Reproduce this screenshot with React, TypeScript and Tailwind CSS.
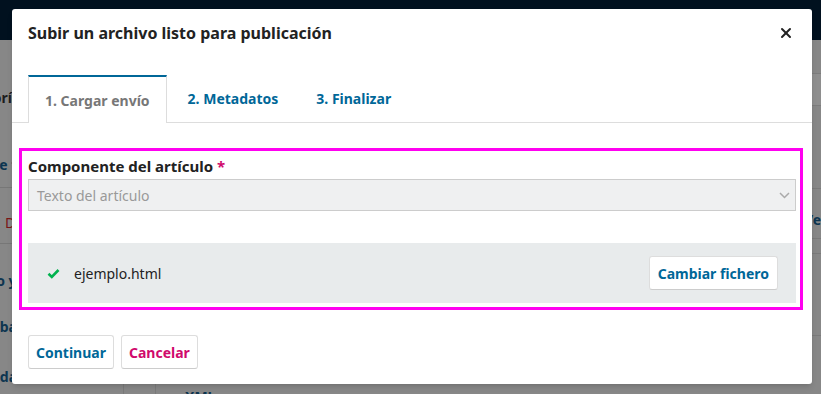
import { X } from 'lucide-react';

const blue = 'text-[#006798]';

function BackgroundPage() {
  return (
    <div className="flex h-full w-full flex-col bg-[#878787]">
      <div className="h-10 shrink-0 bg-[#01111f]" />
      <div className="flex flex-1">
        <div className="flex w-[124px] shrink-0 flex-col border-r border-[#7a7a7a] overflow-hidden">
          <div className="mt-[47px] -ml-[48px] whitespace-nowrap text-[14px] font-bold text-[#1d1d1d]">Categorías</div>
          <div className="mt-[46px] -ml-[43px] whitespace-nowrap text-[14px] font-bold text-[#0d3550]">Tipo de texto</div>
          <div className="mt-[12px] h-px bg-[#777]" />
          <div className="mt-[24px] ml-[5px] whitespace-nowrap text-[14px] text-[#7a1616]">Descargar</div>
          <div className="mt-[10px] h-px bg-[#777]" />
          <div className="mt-[26px] -ml-[48px] whitespace-nowrap text-[14px] font-bold text-[#0d3550]">Archivo y más</div>
          <div className="mt-[25px] -ml-[22px] whitespace-nowrap text-[14px] font-bold text-[#0d3550]">Trabajo</div>
          <div className="mt-[29px] -ml-[27px] whitespace-nowrap text-[14px] font-bold text-[#0d3550]">Ayuda</div>
        </div>
        <div className="w-[32px] shrink-0 border-r border-[#7a7a7a]" />
        <div className="flex flex-1 flex-col">
          <div className="mt-[33px] ml-auto h-[33px] w-[20px] rounded-l-sm border border-[#7c7c7c] bg-[#8e8e8e]" />
          <div className="mt-[82px] h-px bg-[#7a7a7a]" />
          <div className="mt-[20px] ml-[648px] whitespace-nowrap text-[14px] font-bold text-[#0d3550]">Ver</div>
          <div className="mt-[8px] h-px bg-[#7a7a7a]" />
          <div className="mt-[14px] h-px bg-[#7a7a7a]" />
          <div className="mt-[81px] h-px bg-[#7a7a7a]" />
          <div className="mt-[50px] ml-[12px] flex items-center gap-[10px] text-[14px] font-bold text-[#0d3550]">
            <span className="text-[9px]">▶</span>
            <span>XML</span>
          </div>
        </div>
      </div>
    </div>
  );
}

function Check() {
  return (
    <svg width="13" height="11" viewBox="0 0 13 11" className="shrink-0">
      <path d="M1.5 5.8 L4.8 9 L11.5 2" fill="none" stroke="#00b24e" strokeWidth="2.6" />
    </svg>
  );
}

function Chevron() {
  return (
    <svg width="11" height="7" viewBox="0 0 11 7">
      <path d="M1 1 L5.5 5.5 L10 1" fill="none" stroke="#aaa" strokeWidth="1.5" />
    </svg>
  );
}

export default function App() {
  return (
    <div className="relative h-[394px] w-[821px] overflow-hidden font-['Noto_Sans',sans-serif]">
      <BackgroundPage />

      <div className="absolute left-[12px] top-[9px] flex h-[375px] w-[800px] flex-col rounded-[3px] bg-white shadow-md">
        <div className="flex h-12 items-center justify-between pl-4 pr-[18px]">
          <h2 className="text-[16px] font-bold text-[#222]">Subir un archivo listo para publicación</h2>
          <X size={16} strokeWidth={3} className="text-[#222]" />
        </div>

        <div className="mt-[18px] flex border-b border-[#ddd] px-4">
          <div className="-mb-px flex h-[48px] items-center border-x border-t-2 border-x-[#ddd] border-t-[#006798] bg-white px-[16px] text-[14px] font-bold text-[#777]">
            1. Cargar envío
          </div>
          <div className={`flex h-[47px] items-center pl-[21px] pr-[19px] text-[14px] font-bold ${blue}`}>2. Metadatos</div>
          <div className={`flex h-[47px] items-center px-[19px] text-[14px] font-bold ${blue}`}>3. Finalizar</div>
        </div>

        <div className="mt-[25px] ml-[7px] mr-[9px] flex flex-col border-[3px] border-[#ff00f0] pl-[6px] pr-[4px] pt-[4px] pb-[4px]">
          <label className="text-[15px] font-bold leading-[22px] text-[#222]">
            Componente del artículo <span className="text-[#d00a6c]">*</span>
          </label>
          <div className="mt-[2px] flex h-[32px] items-center justify-between border border-[#ccc] bg-[#eff0f1] pl-[8px] pr-[5px] text-[14px] text-[#999]">
            <span>Texto del artículo</span>
            <Chevron />
          </div>
          <div className="mt-[32px] flex h-[60px] items-center justify-between bg-[#e8ebec] pl-[19px] pr-[18px]">
            <div className="flex items-center gap-[14px] text-[14px] text-[#222]">
              <Check />
              <span>ejemplo.html</span>
            </div>
            <button className={`h-[34px] rounded-[3px] border border-[#ddd] border-b-[#ccc] bg-white px-[8px] text-[14px] font-bold ${blue}`}>
              Cambiar fichero
            </button>
          </div>
        </div>

        <div className="mt-[25px] flex gap-[7px] px-4">
          <button className={`h-[34px] rounded-[3px] border border-[#ddd] border-b-[#ccc] bg-white px-[7px] text-[14px] font-bold ${blue}`}>
            Continuar
          </button>
          <button className="h-[34px] rounded-[3px] border border-[#ddd] border-b-[#ccc] bg-white px-[7px] text-[14px] font-bold text-[#d00a6c]">
            Cancelar
          </button>
        </div>
      </div>
    </div>
  );
}
